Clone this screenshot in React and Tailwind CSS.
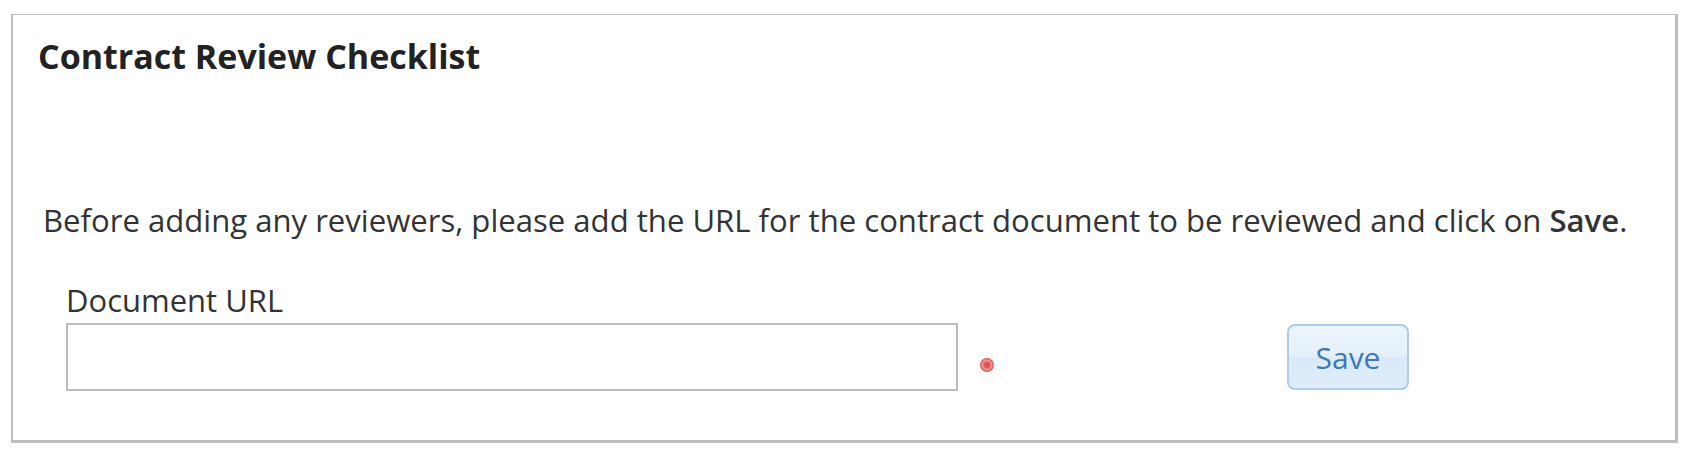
const App = () => {
  return (
    <div className="min-h-[456px] bg-white pt-[14px] pl-[11px] font-['Open_Sans',sans-serif]">
      <div className="w-[1667px] h-[429px] border-t border-l-2 border-r-[3px] border-b-[3px] border-[#bdbdbd] pl-[25px] pt-[18px]">
        <h1 className="text-[34px] leading-[46px] font-bold text-[#222222]">
          Contract Review Checklist
        </h1>

        <p className="mt-[120px] ml-[5px] text-[31.1px] leading-[42px] text-[#333333]">
          Before adding any reviewers, please add the URL for the contract document to be reviewed and click on{" "}
          <span className="font-semibold">Save</span>.
        </p>

        <div className="mt-[38px] ml-[28px]">
          <label className="block text-[31px] leading-[42px] text-[#333333]">Document URL</label>
          <div className="mt-[2px] flex items-center">
            <input
              type="text"
              className="w-[892px] h-[68px] border-2 border-[#bcbcbc] bg-white outline-none px-2 text-[28px]"
            />
            <span className="ml-[22px] mt-[16px] w-[14px] h-[14px] rounded-full bg-[radial-gradient(circle,#dc4a45_0%,#e0605b_30%,#f29a95_45%,#e25852_65%,#d9443f_100%)]" />
            <button className="ml-[293px] w-[122px] h-[66px] rounded-[8px] border-2 border-[#abcdea] bg-[linear-gradient(#edf5fc_0%,#e4effa_50%,#d9e9f7_51%,#dfedf9_100%)] text-[30px] text-[#3d79b4]">
              Save
            </button>
          </div>
        </div>
      </div>
    </div>
  );
};

export default App;
